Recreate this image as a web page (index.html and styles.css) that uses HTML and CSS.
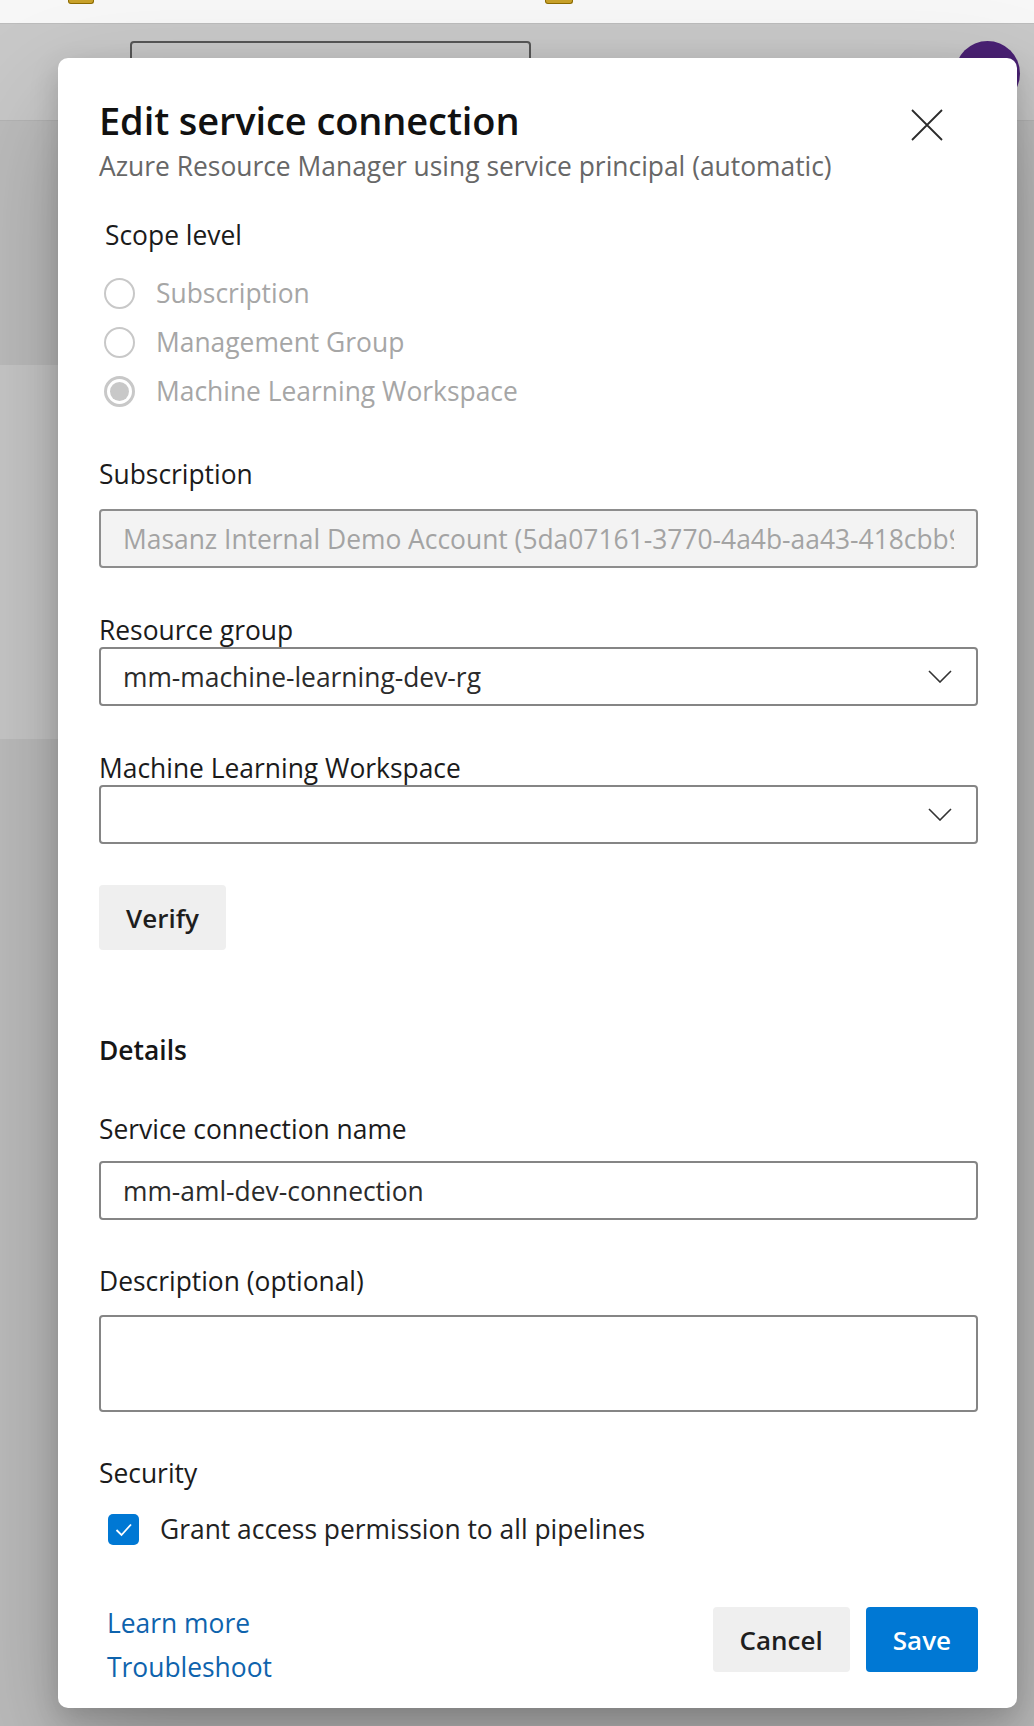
FILE: index.html
```html
<!DOCTYPE html>
<html lang="en">
<head>
<meta charset="utf-8">
<title>Edit service connection</title>
<link rel="stylesheet" href="styles.css">
</head>
<body>
<div class="page">
  <div class="topbar">
    <span class="tb-icon"></span>
    <span class="tb-icon tb-icon-2"></span>
  </div>
  <div class="header">
    <div class="search"></div>
    <div class="avatar"></div>
  </div>
  <div class="main">
    <div class="side-card"></div>
  </div>
</div>

<div class="dialog" role="dialog">
  <div class="dlg-head">
    <div class="dlg-titles">
      <h1 class="dlg-title">Edit service connection</h1>
      <div class="dlg-subtitle">Azure Resource Manager using service principal (automatic)</div>
    </div>
    <button class="close-btn" aria-label="Close">
      <svg width="32" height="32" viewBox="0 0 32 32"><path d="M1 1 L31 31 M31 1 L1 31" stroke="#2b2b2b" stroke-width="1.8" fill="none"/></svg>
    </button>
  </div>

  <div class="scope">
    <div class="scope-label">Scope level</div>
    <div class="radio-list">
      <div class="radio-row"><span class="radio"></span><span class="radio-text">Subscription</span></div>
      <div class="radio-row"><span class="radio"></span><span class="radio-text">Management Group</span></div>
      <div class="radio-row"><span class="radio radio-checked"><span class="radio-dot"></span></span><span class="radio-text">Machine Learning Workspace</span></div>
    </div>
  </div>

  <div class="label label-sub">Subscription</div>
  <div class="input input-disabled input-sub"><span class="input-text">Masanz Internal Demo Account (5da07161-3770-4a4b-aa43-418cbb93f1c2)</span></div>

  <div class="label label-tight">Resource group</div>
  <div class="input select">
    <span class="input-text">mm-machine-learning-dev-rg</span>
    <svg class="chev" width="24" height="13" viewBox="0 0 24 13"><polyline points="1,1 12,12 23,1" fill="none" stroke="#333" stroke-width="1.6"/></svg>
  </div>

  <div class="label label-tight">Machine Learning Workspace</div>
  <div class="input select">
    <span class="input-text"></span>
    <svg class="chev" width="24" height="13" viewBox="0 0 24 13"><polyline points="1,1 12,12 23,1" fill="none" stroke="#333" stroke-width="1.6"/></svg>
  </div>

  <button class="btn btn-default btn-verify">Verify</button>

  <div class="section-title">Details</div>

  <div class="label label-gap">Service connection name</div>
  <div class="input input-name"><span class="input-text">mm-aml-dev-connection</span></div>

  <div class="label label-gap">Description (optional)</div>
  <div class="input textarea"></div>

  <div class="label label-gap">Security</div>
  <div class="check-row">
    <span class="checkbox">
      <svg width="31" height="31" viewBox="0 0 31 31"><polyline points="8.5,16 13.5,21 23,10.5" fill="none" stroke="#fff" stroke-width="1.8"/></svg>
    </span>
    <span class="check-text">Grant access permission to all pipelines</span>
  </div>

  <div class="dlg-footer">
    <div class="links">
      <a class="link" href="#">Learn more</a>
      <a class="link" href="#">Troubleshoot</a>
    </div>
    <div class="buttons">
      <button class="btn btn-default">Cancel</button>
      <button class="btn btn-primary">Save</button>
    </div>
  </div>
</div>
</body>
</html>
```

FILE: styles.css
```css
* { box-sizing: border-box; }

html, body {
  margin: 0;
  padding: 0;
}

body {
  width: 1034px;
  height: 1726px;
  overflow: hidden;
  position: relative;
  font-family: "Open Sans", "Noto Sans", sans-serif;
  background: #bdbdbd;
}

/* ---------- dimmed page behind the dialog ---------- */
.page {
  display: flex;
  flex-direction: column;
  height: 1726px;
}

.topbar {
  height: 24px;
  background: #f7f7f7;
  display: flex;
  align-items: flex-start;
  padding-left: 68px;
  gap: 451px;
  border-bottom: 1px solid #bcbcbc;
}

.tb-icon {
  width: 26px;
  height: 4px;
  background: #c8a12a;
  border-radius: 0 0 3px 3px;
  border: 1px solid #8d6b00;
  border-top: none;
}

.tb-icon-2 { width: 28px; }

.header {
  height: 97px;
  background: #c8c8c8;
  border-bottom: 1px solid #b4b4b4;
  display: flex;
  align-items: flex-start;
  padding: 17px 14px 0 130px;
}

.search {
  width: 401px;
  height: 60px;
  border: 2px solid #575757;
  border-radius: 4px;
}

.avatar {
  margin-left: auto;
  width: 65px;
  height: 65px;
  border-radius: 50%;
  background: #4a2174;
}

.main {
  flex: 1;
  background: #bcbcbc;
}

.side-card {
  margin-top: 244px;
  width: 300px;
  height: 374px;
  background: #c7c7c7;
}

/* ---------- dialog ---------- */
.dialog {
  position: absolute;
  left: 58px;
  top: 58px;
  width: 959px;
  height: 1650px;
  background: #fff;
  border-radius: 10px;
  padding: 36px 39px 0 41px;
  display: flex;
  flex-direction: column;
  box-shadow: 0 51px 115px rgba(0, 0, 0, 0.22), 0 10px 29px rgba(0, 0, 0, 0.18);
  color: #1b1b1b;
}

.dlg-head {
  display: flex;
  align-items: flex-start;
}

.dlg-titles { flex: 1; }

.dlg-title {
  margin: 0;
  font-size: 38px;
  line-height: 52px;
  font-weight: 600;
  color: #111;
  letter-spacing: -0.1px;
}

.dlg-subtitle {
  margin-top: 2px;
  font-size: 26.4px;
  line-height: 36px;
  color: #676767;
}

.close-btn {
  margin-top: 15px;
  margin-right: 35px;
  width: 32px;
  height: 32px;
  padding: 0;
  border: none;
  background: none;
  display: flex;
}

.scope {
  margin-top: 33px;
  padding-left: 6px;
}

.scope-label {
  font-size: 26.4px;
  line-height: 36px;
}

.radio-list {
  margin-top: 16px;
  display: flex;
  flex-direction: column;
}

.radio-row {
  height: 49px;
  display: flex;
  align-items: center;
}

.radio {
  width: 31px;
  height: 31px;
  margin-left: -1px;
  border: 2px solid #c8c8c8;
  border-radius: 50%;
  display: flex;
  align-items: center;
  justify-content: center;
  flex-shrink: 0;
}

.radio-checked { border-width: 3px; }

.radio-dot {
  width: 19px;
  height: 19px;
  border-radius: 50%;
  background: #c8c8c8;
}

.radio-text {
  margin-left: 21px;
  font-size: 26.4px;
  line-height: 49px;
  color: #a6a6a6;
}

.label {
  font-size: 26.4px;
  line-height: 36px;
  color: #1b1b1b;
}

.label-sub { margin-top: 40px; }

.label-tight {
  margin-top: 45px;
  line-height: 34px;
}

.label-gap { margin-top: 43px; }

.input {
  height: 59px;
  border: 2px solid #858585;
  border-radius: 4px;
  background: #fff;
  display: flex;
  align-items: center;
  padding: 0 22px;
  font-size: 26.4px;
  line-height: 36px;
  color: #2b2b2b;
  overflow: hidden;
}

.input-text {
  flex: 1;
  white-space: nowrap;
  overflow: hidden;
}

.input-sub { margin-top: 17px; }

.input-disabled {
  background: #f3f3f3;
  border-color: #8d8d8d;
  color: #a3a3a3;
}

.select { padding-right: 24px; }

.chev { flex-shrink: 0; }

.input-name { margin-top: 14px; }

.textarea {
  margin-top: 16px;
  height: 97px;
}

.btn {
  height: 65px;
  padding: 0 27px;
  border: none;
  border-radius: 4px;
  font-family: "Open Sans", "Noto Sans", sans-serif;
  font-size: 26px;
  font-weight: 600;
  line-height: 36px;
}

.btn-default {
  background: #efefef;
  color: #1e1e1e;
}

.btn-primary {
  background: #0078d4;
  color: #fff;
}

.btn-verify {
  margin-top: 41px;
  align-self: flex-start;
}

.section-title {
  margin-top: 82px;
  font-size: 26.4px;
  line-height: 36px;
  font-weight: 600;
  color: #161616;
}

.check-row {
  margin-top: 20px;
  height: 36px;
  display: flex;
  align-items: center;
  padding-left: 9px;
}

.checkbox {
  width: 31px;
  height: 31px;
  border-radius: 5px;
  background: #0078d4;
  display: flex;
  flex-shrink: 0;
}

.check-text {
  margin-left: 21px;
  font-size: 26.4px;
  line-height: 36px;
  color: #222;
}

.dlg-footer {
  margin-top: 54px;
  display: flex;
  justify-content: space-between;
  align-items: flex-start;
}

.links {
  display: flex;
  flex-direction: column;
  padding-left: 8px;
}

.link {
  font-size: 26.4px;
  line-height: 44px;
  color: #0e63ad;
  text-decoration: none;
}

.buttons {
  margin-top: 6px;
  display: flex;
  gap: 16px;
}
```
